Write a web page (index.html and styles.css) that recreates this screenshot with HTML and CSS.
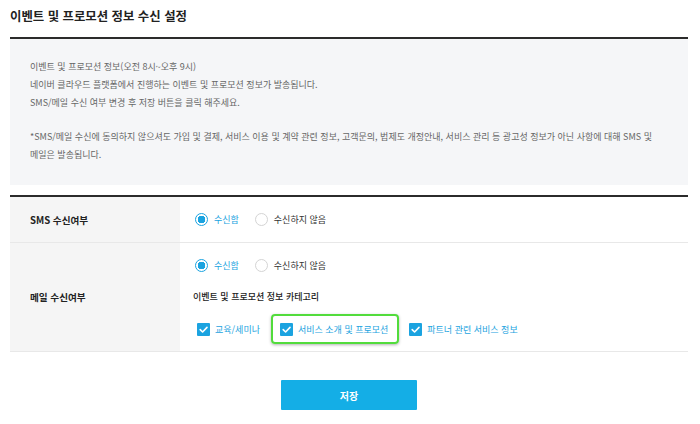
FILE: index.html
```html
<!DOCTYPE html>
<html lang="ko">
<head>
<meta charset="utf-8">
<link rel="stylesheet" href="styles.css">
</head>
<body>
<div class="page">
  <h1 class="title">이벤트 및 프로모션 정보 수신 설정</h1>
  <div class="info">
    <p>이벤트 및 프로모션 정보(오전 8시~오후 9시)<br>네이버 클라우드 플랫폼에서 진행하는 이벤트 및 프로모션 정보가 발송됩니다.<br>SMS/메일 수신 여부 변경 후 저장 버튼을 클릭 해주세요.</p>
    <p>*SMS/메일 수신에 동의하지 않으셔도 가입 및 결제, 서비스 이용 및 계약 관련 정보, 고객문의, 법제도 개정안내, 서비스 관리 등 광고성 정보가 아닌 사항에 대해 SMS 및 메일은 발송됩니다.</p>
  </div>
  <div class="table">
    <div class="row row-sms">
      <div class="label">SMS 수신여부</div>
      <div class="value">
        <div class="radios">
          <span class="radio on"><span class="dot"></span>수신함</span>
          <span class="radio"><span class="dot"></span>수신하지 않음</span>
        </div>
      </div>
    </div>
    <div class="row row-mail">
      <div class="label">메일 수신여부</div>
      <div class="value">
        <div class="radios">
          <span class="radio on"><span class="dot"></span>수신함</span>
          <span class="radio"><span class="dot"></span>수신하지 않음</span>
        </div>
        <div class="cat">이벤트 및 프로모션 정보 카테고리</div>
        <div class="checks">
          <span class="check"><span class="box"><svg viewBox="0 0 13 13" width="13" height="13"><path d="M3.2 6.6 L5.6 9 L10 4.4" fill="none" stroke="#fff" stroke-width="1.6" stroke-linecap="round" stroke-linejoin="round"/></svg></span>교육/세미나</span>
          <span class="check hl"><span class="box"><svg viewBox="0 0 13 13" width="13" height="13"><path d="M3.2 6.6 L5.6 9 L10 4.4" fill="none" stroke="#fff" stroke-width="1.6" stroke-linecap="round" stroke-linejoin="round"/></svg></span>서비스 소개 및 프로모션</span>
          <span class="check"><span class="box"><svg viewBox="0 0 13 13" width="13" height="13"><path d="M3.2 6.6 L5.6 9 L10 4.4" fill="none" stroke="#fff" stroke-width="1.6" stroke-linecap="round" stroke-linejoin="round"/></svg></span>파트너 관련 서비스 정보</span>
        </div>
      </div>
    </div>
  </div>
  <div class="actions">
    <button class="save">저장</button>
  </div>
</div>
</body>
</html>
```
FILE: styles.css
```css
* { box-sizing: border-box; }
html, body { margin: 0; padding: 0; background: #fff; }
body {
  font-family: "Noto Sans CJK KR", "Noto Sans", sans-serif;
  color: #333;
}
.page {
  width: 678px;
  margin-left: 10px;
}
.title {
  margin: 0;
  padding-top: 8px;
  font-size: 12.4px;
  line-height: 17px;
  font-weight: 700;
  color: #222;
  height: 37px;
}
.info {
  border-top: 2px solid #2b2b2b;
  background: #f5f6f8;
  padding: 19px 20px 21px;
  font-size: 9px;
  line-height: 18px;
  color: #666;
  word-break: keep-all;
}
.info p { margin: 0; }
.info p + p { margin-top: 16px; }
.table {
  margin-top: 10px;
  border-top: 2px solid #2b2b2b;
}
.row {
  display: flex;
  border-bottom: 1px solid #e8e8e8;
}
.label {
  width: 170px;
  flex: none;
  background: #f5f5f5;
  padding-left: 20px;
  display: flex;
  align-items: center;
  font-size: 9.6px;
  font-weight: 700;
  color: #222;
}
.value {
  flex: 1;
  padding-left: 13px;
  display: flex;
  flex-direction: column;
  align-items: flex-start;
}
.row-sms .value { padding-top: 12px; padding-bottom: 13px; }
.row-mail .value { padding-top: 12px; padding-bottom: 7px; }
.radios {
  display: flex;
  align-items: center;
  height: 20px;
  margin-left: 2px;
  gap: 16px;
  font-size: 9px;
}
.radio {
  display: flex;
  align-items: center;
  gap: 6px;
  color: #333;
}
.radio .dot {
  width: 13px;
  height: 13px;
  border-radius: 50%;
  border: 1px solid #d4d4d4;
  background: #fff;
  flex: none;
}
.radio.on { color: #1ba3e0; }
.radio.on .dot {
  border-color: #1ba3e0;
  background: radial-gradient(circle, #1ba3e0 0 3.6px, #fff 4px);
}
.cat {
  margin-top: 12px;
  font-size: 9px;
  line-height: 20px;
  font-weight: 500;
  color: #222;
}
.checks {
  margin-top: 7px;
  margin-left: 4px;
  display: flex;
  align-items: center;
  height: 30px;
  gap: 11px;
  font-size: 9px;
  color: #1ba3e0;
}
.check {
  display: flex;
  align-items: center;
  gap: 5px;
}
.check .box {
  width: 13px;
  height: 13px;
  border-radius: 1px;
  background: #1ba3e0;
  display: flex;
  flex: none;
}
.check.hl {
  height: 30px;
  padding: 0 9px 0 7px;
  border: 2px solid #52dc3c;
  border-radius: 4px;
  box-shadow: 0 1px 3px rgba(0, 0, 0, 0.3);
  margin-right: -1px;
}
.actions {
  display: flex;
  justify-content: center;
  padding-top: 28px;
}
.save {
  width: 136px;
  height: 30px;
  border: none;
  border-radius: 1px;
  background: #14aee6;
  color: #fff;
  font-family: inherit;
  font-size: 10px;
  font-weight: 700;
  cursor: pointer;
}
```
